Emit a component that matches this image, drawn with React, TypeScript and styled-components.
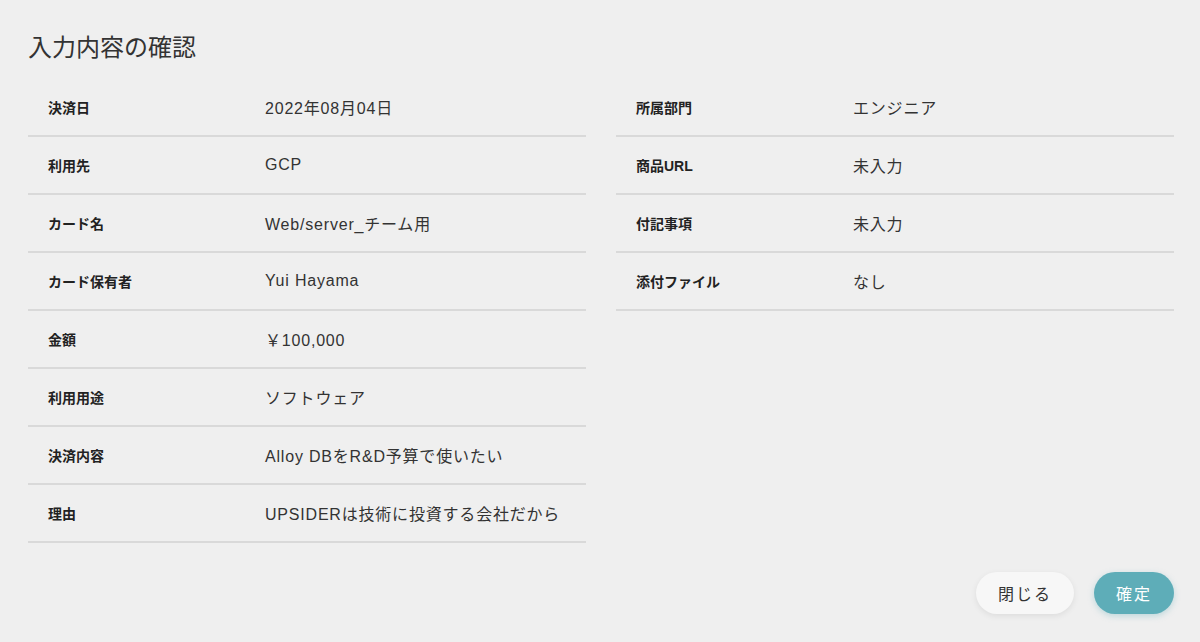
import styled, { createGlobalStyle } from 'styled-components';

const GlobalStyle = createGlobalStyle`
  html, body {
    margin: 0;
    padding: 0;
    background: #efefef;
    font-family: "Liberation Sans", "Noto Sans CJK JP", sans-serif;
    color: #333;
  }
  * { box-sizing: border-box; }
`;

const Page = styled.div`
  min-height: 100vh;
  padding: 30px 26px 28px 28px;
  display: flex;
  flex-direction: column;
`;

const Title = styled.h2`
  margin: 0 0 17px;
  font-family: "Noto Sans CJK JP", sans-serif;
  font-size: 24px;
  line-height: 32px;
  font-weight: 400;
  color: #333;
`;

const Columns = styled.div`
  display: grid;
  grid-template-columns: 1fr 1fr;
  column-gap: 30px;
  align-items: start;
`;

const List = styled.dl`
  margin: 0;
`;

const Row = styled.div`
  display: flex;
  align-items: center;
  height: 58px;
  padding-left: 20px;
  border-bottom: 2px solid #d9d9d9;
`;

const Label = styled.dt`
  width: 217px;
  flex-shrink: 0;
  font-size: 14px;
  font-weight: 700;
  color: #222;
`;

const Value = styled.dd`
  margin: 0;
  font-size: 16px;
  letter-spacing: 0.8px;
  color: #333;
`;

const Footer = styled.div`
  margin-top: auto;
  display: flex;
  justify-content: flex-end;
  gap: 20px;
`;

const Button = styled.button<{ $primary?: boolean }>`
  height: 42px;
  padding: 0 22px;
  border: none;
  border-radius: 21px;
  font-family: "Noto Sans CJK JP", sans-serif;
  font-size: 16px;
  letter-spacing: 2px;
  cursor: pointer;
  background: ${(p) => (p.$primary ? '#5eadb8' : '#f7f7f7')};
  color: ${(p) => (p.$primary ? '#fff' : '#333')};
  box-shadow: ${(p) =>
    p.$primary ? '0 2px 6px rgba(94, 173, 184, 0.35)' : '0 2px 6px rgba(0, 0, 0, 0.08)'};
`;

const left: [string, string][] = [
  ['決済日', '2022年08月04日'],
  ['利用先', 'GCP'],
  ['カード名', 'Web/server_チーム用'],
  ['カード保有者', 'Yui Hayama'],
  ['金額', '￥100,000'],
  ['利用用途', 'ソフトウェア'],
  ['決済内容', 'Alloy DBをR&D予算で使いたい'],
  ['理由', 'UPSIDERは技術に投資する会社だから'],
];

const right: [string, string][] = [
  ['所属部門', 'エンジニア'],
  ['商品URL', '未入力'],
  ['付記事項', '未入力'],
  ['添付ファイル', 'なし'],
];

const Details = ({ items }: { items: [string, string][] }) => (
  <List>
    {items.map(([k, v]) => (
      <Row key={k}>
        <Label>{k}</Label>
        <Value>{v}</Value>
      </Row>
    ))}
  </List>
);

export default function App() {
  return (
    <>
      <GlobalStyle />
      <Page>
        <Title>入力内容の確認</Title>
        <Columns>
          <Details items={left} />
          <Details items={right} />
        </Columns>
        <Footer>
          <Button>閉じる</Button>
          <Button $primary>確定</Button>
        </Footer>
      </Page>
    </>
  );
}
